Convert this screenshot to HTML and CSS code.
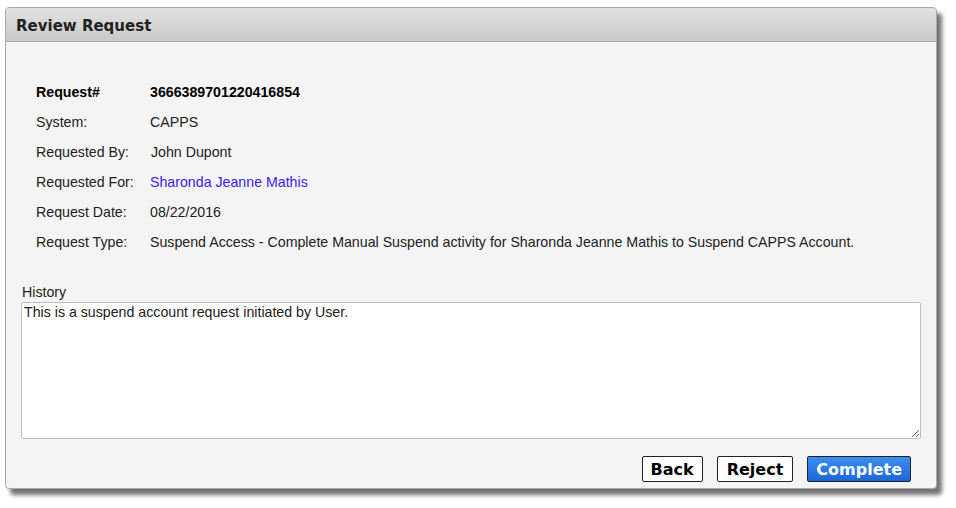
FILE: index.html
```html
<!DOCTYPE html>
<html lang="en">
<head>
	<meta charset="UTF-8">
	<title>Review Request</title>
	<link rel="stylesheet" href="styles.css">
</head>
<body>
	<div class="panel">
		<div class="panel-head">Review Request</div>
		<div class="panel-body">
			<table class="details">
				<tr class="strong"><td class="label">Request#</td><td>3666389701220416854</td></tr>
				<tr><td class="label">System:</td><td>CAPPS</td></tr>
				<tr><td class="label">Requested By:</td><td class="by">John Dupont</td></tr>
				<tr><td class="label">Requested For:</td><td class="link">Sharonda Jeanne Mathis</td></tr>
				<tr><td class="label">Request Date:</td><td>08/22/2016</td></tr>
				<tr><td class="label">Request Type:</td><td>Suspend Access - Complete Manual Suspend activity for Sharonda Jeanne Mathis to Suspend CAPPS Account.</td></tr>
			</table>
			<div class="history">
				<div class="history-label">History</div>
				<textarea>This is a suspend account request initiated by User.</textarea>
			</div>
			<div class="buttons">
				<button>Back</button>
				<button class="wide">Reject</button>
				<button class="primary">Complete</button>
			</div>
		</div>
	</div>
</body>
</html>
```

FILE: styles.css
```css
html, body {
	height: 100%;
}
body {
	margin: 0;
	padding-top: 7px;
	box-sizing: border-box;
	background: #fff;
	font-family: "Liberation Sans", Arial, sans-serif;
	font-size: 14.2px;
	color: #222;
}
.panel {
	margin-left: 5px;
	width: 930px;
	height: 480px;
	border: 1px solid #a9a9a9;
	border-radius: 4px;
	background: #f4f4f4;
	box-shadow: 5px 6px 4px rgba(0, 0, 0, 0.55);
	display: flex;
	flex-direction: column;
	overflow: hidden;
}
.panel-head {
	height: 30px;
	line-height: 30px;
	padding: 3px 0 0 10px;
	border-bottom: 1px solid #a9a9a9;
	background: linear-gradient(#e2e2e2, #c9c9c9);
	font-family: "DejaVu Sans", Verdana, sans-serif;
	font-weight: bold;
	font-size: 15px;
	color: #222;
}
.panel-body {
	flex: 1;
	padding: 35px 25px 0 15px;
	display: flex;
	flex-direction: column;
}
.details {
	border-collapse: collapse;
	margin-left: 15px;
}
.details td {
	padding: 0;
	height: 30px;
	white-space: nowrap;
}
.details .label {
	width: 114px;
}
.details .strong td {
	font-weight: bold;
	color: #000;
}
.details .by {
	padding-left: 1px;
}
.details .link {
	color: #3a1aff;
}
.history {
	margin-top: 27px;
}
.history-label {
	line-height: 16px;
	margin-left: 1px;
	margin-bottom: 2px;
}
textarea {
	display: block;
	box-sizing: border-box;
	width: 900px;
	height: 137px;
	margin: 0;
	padding: 1px 2px;
	border: 1px solid #bdbdbd;
	border-radius: 2px;
	background: #fff;
	font-family: "Liberation Sans", Arial, sans-serif;
	font-size: 14.2px;
	color: #222;
	resize: vertical;
}
.buttons {
	margin-top: 17px;
	display: flex;
	justify-content: flex-end;
	gap: 14px;
}
button {
	height: 26px;
	padding: 0 8px;
	border: 1px solid #222;
	border-radius: 2px;
	background: #fff;
	font-family: "DejaVu Sans", Verdana, sans-serif;
	font-weight: bold;
	font-size: 16px;
	color: #000;
}
button.wide {
	padding: 0 9px;
}
button.primary {
	padding: 0 8px;
	background: linear-gradient(#3c8ef0, #1d67d6);
	color: #fff;
}
```
